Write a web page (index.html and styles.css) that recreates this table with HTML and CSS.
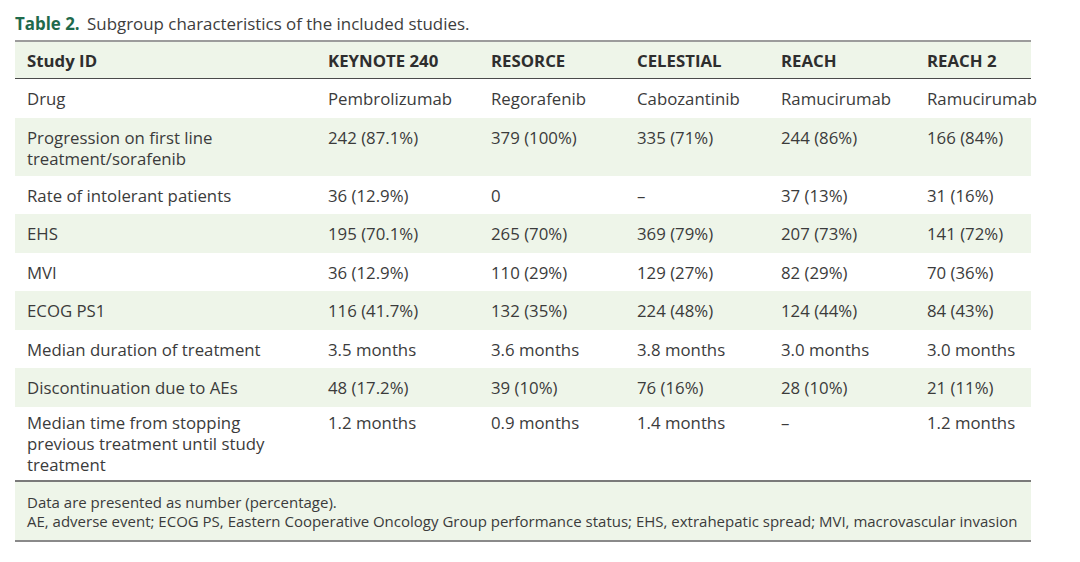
FILE: index.html
```html
<!DOCTYPE html>
<html>
<head>
<meta charset="utf-8">
<link rel="stylesheet" href="styles.css">
</head>
<body>
<div class="page">
  <div class="caption"><span class="label">Table 2.</span> Subgroup characteristics of the included studies.</div>
  <table class="data">
    <colgroup>
      <col class="c1"><col class="c2"><col class="c3"><col class="c4"><col class="c5"><col class="c6">
    </colgroup>
    <thead>
      <tr><th>Study ID</th><th>KEYNOTE 240</th><th>RESORCE</th><th>CELESTIAL</th><th>REACH</th><th>REACH 2</th></tr>
    </thead>
    <tbody>
      <tr><td>Drug</td><td>Pembrolizumab</td><td>Regorafenib</td><td>Cabozantinib</td><td>Ramucirumab</td><td>Ramucirumab</td></tr>
      <tr class="alt multi"><td>Progression on first line<br>treatment/sorafenib</td><td>242 (87.1%)</td><td>379 (100%)</td><td>335 (71%)</td><td>244 (86%)</td><td>166 (84%)</td></tr>
      <tr><td>Rate of intolerant patients</td><td>36 (12.9%)</td><td>0</td><td>–</td><td>37 (13%)</td><td>31 (16%)</td></tr>
      <tr class="alt"><td>EHS</td><td>195 (70.1%)</td><td>265 (70%)</td><td>369 (79%)</td><td>207 (73%)</td><td>141 (72%)</td></tr>
      <tr><td>MVI</td><td>36 (12.9%)</td><td>110 (29%)</td><td>129 (27%)</td><td>82 (29%)</td><td>70 (36%)</td></tr>
      <tr class="alt"><td>ECOG PS1</td><td>116 (41.7%)</td><td>132 (35%)</td><td>224 (48%)</td><td>124 (44%)</td><td>84 (43%)</td></tr>
      <tr><td>Median duration of treatment</td><td>3.5 months</td><td>3.6 months</td><td>3.8 months</td><td>3.0 months</td><td>3.0 months</td></tr>
      <tr class="alt"><td>Discontinuation due to AEs</td><td>48 (17.2%)</td><td>39 (10%)</td><td>76 (16%)</td><td>28 (10%)</td><td>21 (11%)</td></tr>
      <tr class="last"><td>Median time from stopping<br>previous treatment until study<br>treatment</td><td>1.2 months</td><td>0.9 months</td><td>1.4 months</td><td>–</td><td>1.2 months</td></tr>
    </tbody>
  </table>
  <div class="notes">
    <p>Data are presented as number (percentage).</p>
    <p>AE, adverse event; ECOG PS, Eastern Cooperative Oncology Group performance status; EHS, extrahepatic spread; MVI, macrovascular invasion</p>
  </div>
</div>
</body>
</html>
```

FILE: styles.css
```css
html, body {
  margin: 0;
  padding: 0;
  background: #ffffff;
}
body {
  font-family: "Open Sans", Roboto, "Liberation Sans", sans-serif;
  color: #3b3b3b;
}
.page {
  width: 1016px;
  padding: 13px 0 0 15px;
}
.caption {
  font-size: 16.9px;
  line-height: 21px;
  margin-bottom: 6px;
  color: #3d3d3d;
}
.caption .label {
  font-weight: 700;
  color: #1f6a4c;
  margin-right: 3px;
}
.data {
  width: 1016px;
  border-collapse: collapse;
  table-layout: fixed;
  font-size: 16.8px;
}
.c1 { width: 301px; }
.c2 { width: 163px; }
.c3 { width: 146px; }
.c4 { width: 144px; }
.c5 { width: 146px; }
.c6 { width: 116px; }
.data th {
  text-align: left;
  font-weight: 700;
  color: #2e2e2e;
  background: #eef5e9;
  padding: 8px 12px 7px;
  line-height: 21px;
  border-top: 2px solid #9c9c9c;
  border-bottom: 1.5px solid #4a4a4a;
}
.data td {
  vertical-align: top;
  padding: 9px 12px 8.5px;
  line-height: 21px;
  white-space: nowrap;
}
.data tr.alt td {
  background: #eef5e9;
}
.data tr.multi td {
  padding-bottom: 7px;
}
.data tr.last td {
  padding-top: 5px;
  padding-bottom: 5px;
  border-bottom: 2px solid #7a7a7a;
}
.notes {
  background: #eef5e9;
  padding: 11px 12px 9px;
  font-size: 15px;
  line-height: 19px;
  border-bottom: 2px solid #8a8a8a;
  color: #3b3b3b;
}
.notes p {
  margin: 0;
}
```
